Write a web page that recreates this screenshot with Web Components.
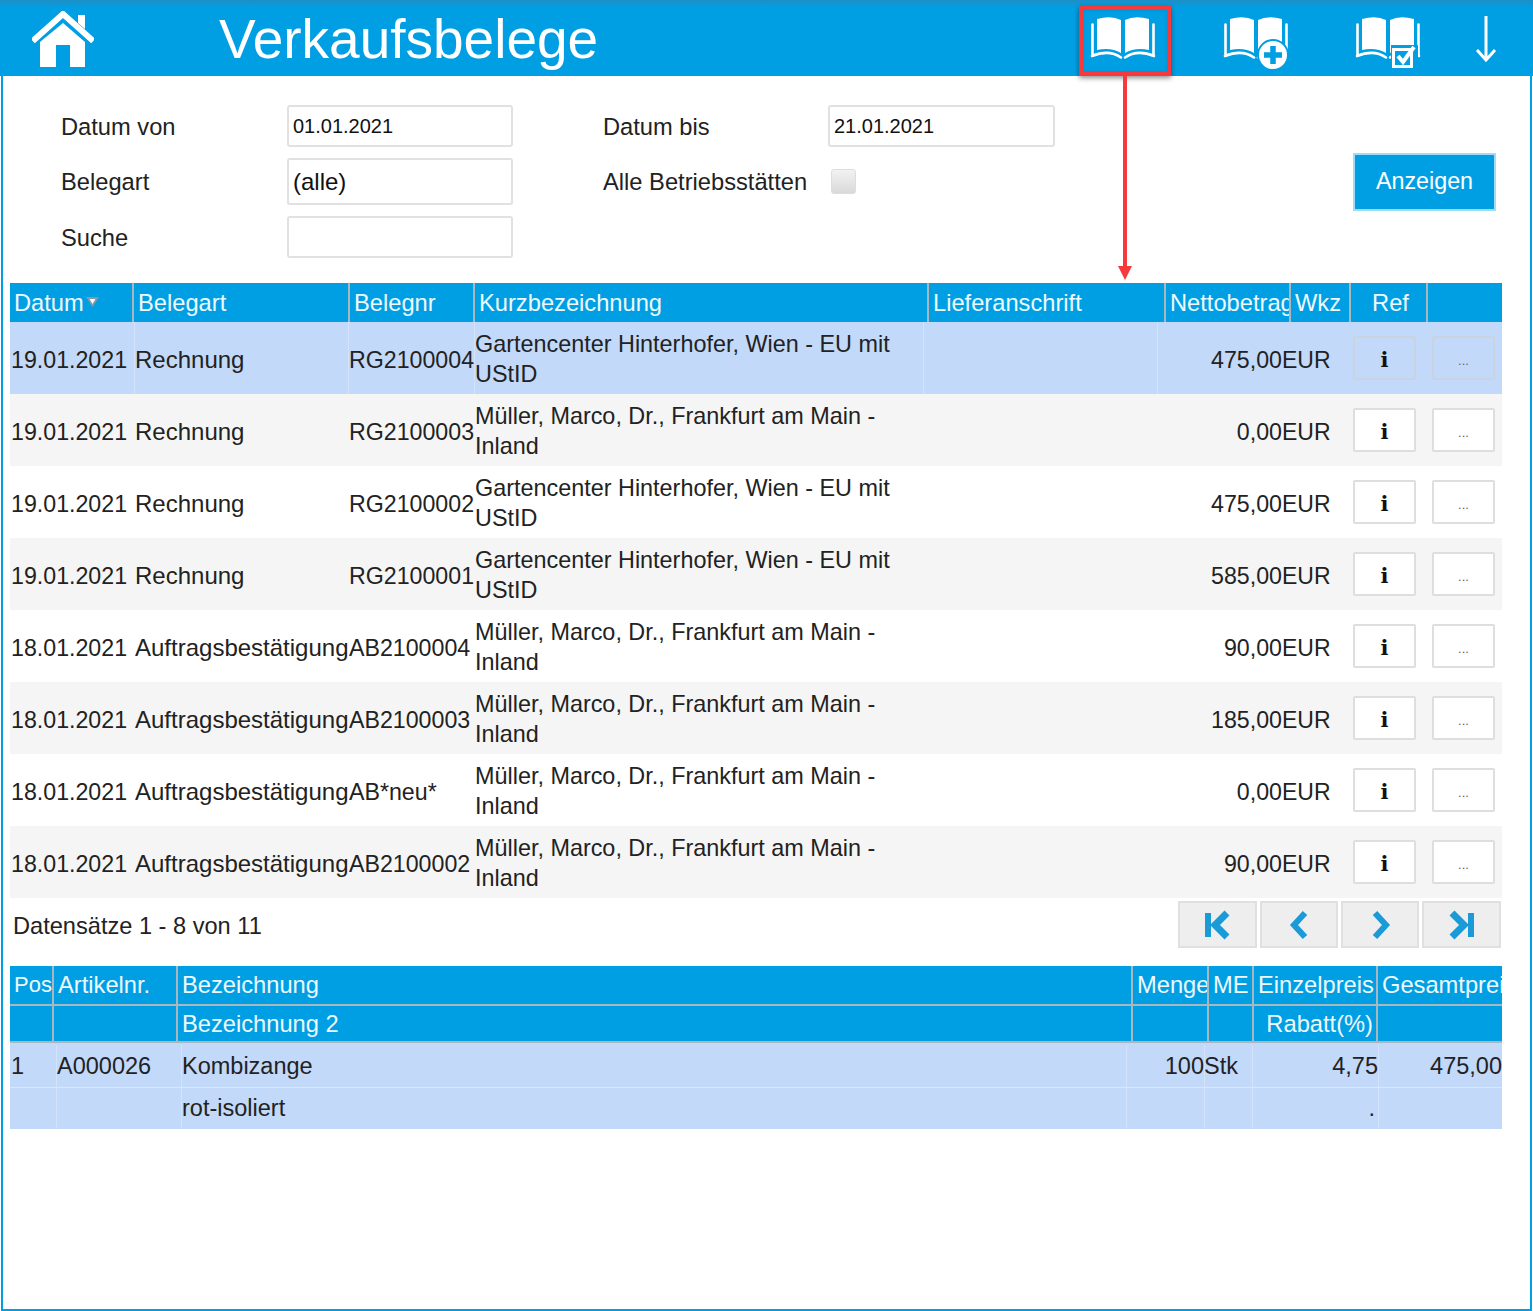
<!DOCTYPE html>
<html lang="de"><head><meta charset="utf-8"><title>Verkaufsbelege</title>
<style>
html,body{margin:0;padding:0;background:#fff}
body{font-family:"Liberation Sans",Arial,sans-serif;color:#222}
</style></head><body>
<vk-app>
  <vk-topbar title="Verkaufsbelege"></vk-topbar>
  <vk-filter></vk-filter>
  <vk-doc-table></vk-doc-table>
  <vk-pager>Datensätze 1 - 8 von 11</vk-pager>
  <vk-pos-table></vk-pos-table>
  <vk-callout></vk-callout>
</vk-app>
<script>
const BOOK=`<path d="M8 4Q22 0 32 5V38Q22 32 8 35Z M36 5Q46 0 60 4V35Q46 32 36 38Z" fill="#fff"/>
<path d="M3.500 9.500V41M3 41Q20 34 32 42.500M65 41Q48 34 36 42.500M64.500 9.500V41" fill="none" stroke="#fff" stroke-width="2.600" stroke-linecap="round"/>`;
function def(name,css,html,init){
  customElements.define(name,class extends HTMLElement{
    constructor(){super();const r=this.attachShadow({mode:'open'});
      r.innerHTML=`<style>${css}</style>${typeof html==='function'?html(this):html}`;}
    connectedCallback(){if(init&&!this._i){this._i=1;init(this)}}
  });
}
def('vk-app',`:host{display:block;position:relative;box-sizing:border-box;width:1531px;height:1311px;margin-left:1px;border:solid #009fe3;border-width:0 2px 2px 2px}`,`<slot></slot>`);

def('vk-book',`:host{display:block;width:68px;height:56px}svg{display:block;overflow:visible}`,'',el=>{
  const b=el.getAttribute('badge');let x='';
  if(b==='plus')x=`<circle cx="51" cy="40" r="15" fill="#fff" stroke="#009fe3" stroke-width="2"/><path d="M51 31V49M42 40H60" stroke="#009fe3" stroke-width="5.500"/>`;
  if(b==='check')x=`<rect x="37" y="30" width="27" height="23" fill="#009fe3"/><rect x="39.500" y="34.500" width="18" height="17" fill="none" stroke="#fff" stroke-width="3"/><path d="M44 41L49 47L60 32" fill="none" stroke="#fff" stroke-width="4"/>`;
  el.shadowRoot.innerHTML+=`<svg width="68" height="56" viewBox="0 0 68 56">${BOOK}${x}</svg>`;
});

def('vk-topbar',`:host{display:flex;align-items:center;box-sizing:border-box;height:76px;margin:0 -3px;background:linear-gradient(#1d8fc6 0,#009fe3 8px);padding-left:32px;color:#fff}
.home{width:62px;height:56px;display:block;margin-top:2px}
h1{margin:0 0 0 125px;font:400 55px/1 "Liberation Sans",Arial,sans-serif;width:870px;white-space:nowrap;position:relative;top:1px}
.icons{display:flex}
vk-book{position:relative;top:5px}
.b{margin-left:65px}.c{margin-left:64px}
.arrow{margin-left:52px;display:block;position:relative;top:1px}`,
(el)=>`<svg class="home" viewBox="0 0 62 56"><path d="M3 28L31 3L59 28" fill="none" stroke="#fff" stroke-width="6" stroke-linecap="square"/><path d="M46 4H53V18L46 12Z" fill="#fff"/><path fill-rule="evenodd" d="M31 12L53 31V56H8V31ZM24 34V56H38V34Z" fill="#fff"/></svg>
<h1>${el.getAttribute('title')||'Verkaufsbelege'}</h1>
<div class="icons"><vk-book class="a"></vk-book><vk-book class="b" badge="plus"></vk-book><vk-book class="c" badge="check"></vk-book></div>
<svg class="arrow" width="24" height="50" viewBox="0 0 24 50"><path d="M12 2V46M3 36L12 46L21 36" fill="none" stroke="#fff" stroke-width="3"/></svg>`);

def('vk-label',`:host{display:block;font-size:23.700px;color:#222;white-space:nowrap;padding-top:2px}`,`<slot></slot>`);
def('vk-field',`:host{display:flex;align-items:center;box-sizing:border-box;border:2px solid #e1e1e1;border-radius:3px;background:#fff;padding:0 4px;color:#111;height:100%;white-space:nowrap;font-size:20px}
:host([big]){font-size:24px}`,`<slot></slot>`);
def('vk-check',`:host{display:block;box-sizing:border-box;width:25px;height:25px;border:1px solid #ddd;border-radius:3px;background:linear-gradient(#f2f2f2,#d9d9d9);margin-left:3px}`,'');
def('vk-action',`:host{display:flex;align-items:center;justify-content:center;box-sizing:border-box;width:143px;height:58px;background:#009fe3;border:2px solid #9fdcf5;color:#fff;font-size:23.300px}`,`<slot></slot>`);
def('vk-filter',`:host{display:grid;box-sizing:border-box;height:207px;padding:29px 0 0 58px;grid-template-columns:226px 226px 90px 225px 227px 298px 143px;grid-template-rows:42px 47px 42px;row-gap:11px;align-items:center}
vk-field{height:100%}
vk-action{grid-column:7;grid-row:2;align-self:center}
.c4{grid-column:4}.c1{grid-column:1}`,
`<vk-label class="c1">Datum von</vk-label><vk-field>01.01.2021</vk-field><vk-label class="c4">Datum bis</vk-label><vk-field>21.01.2021</vk-field>
<vk-label class="c1">Belegart</vk-label><vk-field big>(alle)</vk-field><vk-label class="c4">Alle Betriebsstätten</vk-label><vk-check></vk-check><vk-action>Anzeigen</vk-action>
<vk-label class="c1">Suche</vk-label><vk-field></vk-field>`);

def('vk-cell',`:host{display:flex;align-items:center;box-sizing:border-box;min-width:0;overflow:hidden;font-size:24px;line-height:30px;padding-left:1px;white-space:nowrap}
:host([wrap]){white-space:normal}
:host([right]){justify-content:flex-end;padding-left:0}
:host([head]){color:#eef9fe;font-size:23.700px;padding-left:4px;border-left:2px solid #a9b8c0}
:host([head][first]){border-left:0;padding-left:4px}
:host([head][center]){justify-content:center}
:host([head][end]){justify-content:flex-end;padding-right:3px}
:host([sep]){box-shadow:inset 1px 0 rgba(255,255,255,.28)}`,`<slot></slot>`);
def('vk-row',`:host{display:grid;width:1492px;margin-left:7px;box-sizing:border-box}
:host([kind=head]){background:#009fe3}
:host([kind=sel]){background:#c3d9f9}
:host([kind=even]){background:#f5f5f5}
:host([kind=odd]){background:#fff}`,`<slot></slot>`);
def('vk-rowbtn',`:host{display:flex;align-items:center;justify-content:center;box-sizing:border-box;width:63px;height:44px;margin:auto 0 auto 8px;border:2px solid #dedede;border-radius:2px;background:transparent}
:host([plain]){background:#fff}
:host([sel]){border-color:#c9d3e2}
.i{font:700 21px/1 "DejaVu Serif",serif;color:#111;position:relative;top:1px}
.d{font:400 13px/1 "Liberation Sans",sans-serif;color:#666;position:relative;top:2px}`,
el=>`<span class="${el.getAttribute('t')==='i'?'i':'d'}">${el.getAttribute('t')==='i'?'i':'...'}</span>`);

const docCols='124px 214px 126px 449px 234px 125px 63px 79px 78px';
const headCols='122px 216px 125px 454px 237px 125px 60px 77px 76px';
const G='Gartencenter Hinterhofer, Wien - EU mit<br>UStID',M='Müller, Marco, Dr., Frankfurt am Main -<br>Inland';
const docs=[
['19.01.2021','Rechnung','RG2100004',G,'475,00','sel'],
['19.01.2021','Rechnung','RG2100003',M,'0,00','even'],
['19.01.2021','Rechnung','RG2100002',G,'475,00','odd'],
['19.01.2021','Rechnung','RG2100001',G,'585,00','even'],
['18.01.2021','Auftragsbestätigung','AB2100004',M,'90,00','odd'],
['18.01.2021','Auftragsbestätigung','AB2100003',M,'185,00','even'],
['18.01.2021','Auftragsbestätigung','AB*neu*',M,'0,00','odd'],
['18.01.2021','Auftragsbestätigung','AB2100002',M,'90,00','even']
];
const SORT=`<svg width="15" height="12" viewBox="0 0 15 12" style="flex:none;margin-left:1px;margin-bottom:2px"><path d="M1 1H14L7.500 11Z" fill="#8a98a0"/><path d="M4.500 3H10.500L7.500 8Z" fill="#f2fbff"/></svg>`;
def('vk-doc-table',`:host{display:block}
vk-row.h{height:39px}vk-row.b{height:72px}
vk-row.b vk-cell{padding-top:4px}
vk-row.b vk-cell.k{padding-top:2px;font-size:23.400px}
vk-cell.n{font-size:23.200px}
vk-cell.e{font-size:23px}`,
()=>`<vk-row class="h" kind="head" style="grid-template-columns:${headCols}">
<vk-cell head first>Datum${SORT}</vk-cell><vk-cell head>Belegart</vk-cell><vk-cell head>Belegnr</vk-cell><vk-cell head>Kurzbezeichnung</vk-cell><vk-cell head>Lieferanschrift</vk-cell><vk-cell head>Nettobetrag</vk-cell><vk-cell head>Wkz</vk-cell><vk-cell head center>Ref</vk-cell><vk-cell head></vk-cell></vk-row>`+
docs.map(d=>{const s=d[5]==='sel'?'sep':'';const p=d[5]==='sel'?'sel':'plain';return `<vk-row class="b" kind="${d[5]}" style="grid-template-columns:${docCols}">
<vk-cell class="n">${d[0]}</vk-cell><vk-cell ${s}>${d[1]}</vk-cell><vk-cell class="n" ${s}>${d[2]}</vk-cell><vk-cell class="k" wrap ${s}><span>${d[3]}</span></vk-cell><vk-cell ${s}></vk-cell><vk-cell class="n" right ${s}>${d[4]}</vk-cell><vk-cell class="e" style="padding-left:0">EUR</vk-cell><vk-rowbtn t="i" ${p}></vk-rowbtn><vk-rowbtn t="d" ${p}></vk-rowbtn></vk-row>`}).join(''));

const PG={
 first:'<path d="M5 6V30" stroke-width="6"/><path d="M24 6L12 18L24 30" stroke-width="7"/>',
 prev:'<path d="M20 6L9 18L20 30" stroke-width="6"/>',
 next:'<path d="M9 6L20 18L9 30" stroke-width="6"/>',
 last:'<path d="M24 6V30" stroke-width="6"/><path d="M5 6L17 18L5 30" stroke-width="7"/>'
};
def('vk-pagebtn',`:host{display:flex;align-items:center;justify-content:center;box-sizing:border-box;height:47px;background:#eee;border:2px solid #e0e0e0}svg{display:block;fill:none;stroke:#1a9ad6}`,
el=>`<svg width="29" height="36" viewBox="0 0 29 36">${PG[el.getAttribute('k')]}</svg>`);
def('vk-pager',`:host{display:flex;box-sizing:border-box;height:68px;width:1498px;padding:3px 0 0 10px;color:#222;font-size:23.600px}
.t{flex:1;height:47px;display:flex;align-items:center;position:relative;top:2px}
.p{display:flex;gap:3px}`,
`<div class="t"><slot></slot></div><div class="p"><vk-pagebtn k="first" style="width:79px"></vk-pagebtn><vk-pagebtn k="prev" style="width:78px"></vk-pagebtn><vk-pagebtn k="next" style="width:78px"></vk-pagebtn><vk-pagebtn k="last" style="width:79px"></vk-pagebtn></div>`);

const pHead='42px 124px 955px 76px 45px 124px 126px';
const pBody='46px 125px 945px 78px 48px 126px 124px';
def('vk-pos-table',`:host{display:block}
vk-row.h{height:38px}vk-row.h2{height:39px;border-top:2px solid #a9b8c0;border-bottom:2px solid #a9b8c0}
vk-row.b{height:44px;padding-top:2px}vk-row.b2{height:42px;border-top:1px solid rgba(255,255,255,.4);padding-bottom:1px}
vk-row.b vk-cell,vk-row.b2 vk-cell{font-size:23.500px}
.pos{font-size:22px}`,
`<vk-row class="h" kind="head" style="grid-template-columns:${pHead}"><vk-cell class="pos" head first>Pos</vk-cell><vk-cell head>Artikelnr.</vk-cell><vk-cell head>Bezeichnung</vk-cell><vk-cell head>Menge</vk-cell><vk-cell head>ME</vk-cell><vk-cell head>Einzelpreis</vk-cell><vk-cell head>Gesamtpreis</vk-cell></vk-row>
<vk-row class="h2" kind="head" style="grid-template-columns:${pHead}"><vk-cell head first></vk-cell><vk-cell head></vk-cell><vk-cell head>Bezeichnung 2</vk-cell><vk-cell head></vk-cell><vk-cell head></vk-cell><vk-cell head end>Rabatt(%)</vk-cell><vk-cell head></vk-cell></vk-row>
<vk-row class="b" kind="sel" style="grid-template-columns:${pBody}"><vk-cell>1</vk-cell><vk-cell sep>A000026</vk-cell><vk-cell sep>Kombizange</vk-cell><vk-cell right sep>100</vk-cell><vk-cell sep style="padding-left:0">Stk</vk-cell><vk-cell right sep>4,75</vk-cell><vk-cell right sep>475,00</vk-cell></vk-row>
<vk-row class="b2" kind="sel" style="grid-template-columns:${pBody}"><vk-cell></vk-cell><vk-cell sep></vk-cell><vk-cell sep>rot-isoliert</vk-cell><vk-cell sep></vk-cell><vk-cell sep></vk-cell><vk-cell right sep style="padding-right:3px">.</vk-cell><vk-cell sep></vk-cell></vk-row>`);

def('vk-callout',`:host{position:absolute;left:1076px;top:6px;width:92px;height:274px;display:block;pointer-events:none}
.box{box-sizing:border-box;width:92px;height:70px;border:4px solid #f5393c;box-shadow:0 2px 5px rgba(0,0,0,.45),inset 0 0 3px rgba(0,0,0,.15)}
svg{position:absolute;left:36px;top:70px;display:block}`,
`<div class="box"></div><svg width="20" height="204" viewBox="0 0 20 204"><path d="M10 0V192" stroke="#f5393c" stroke-width="4"/><path d="M3 190H17L10 204Z" fill="#f5393c"/></svg>`);
</script>
</body></html>
